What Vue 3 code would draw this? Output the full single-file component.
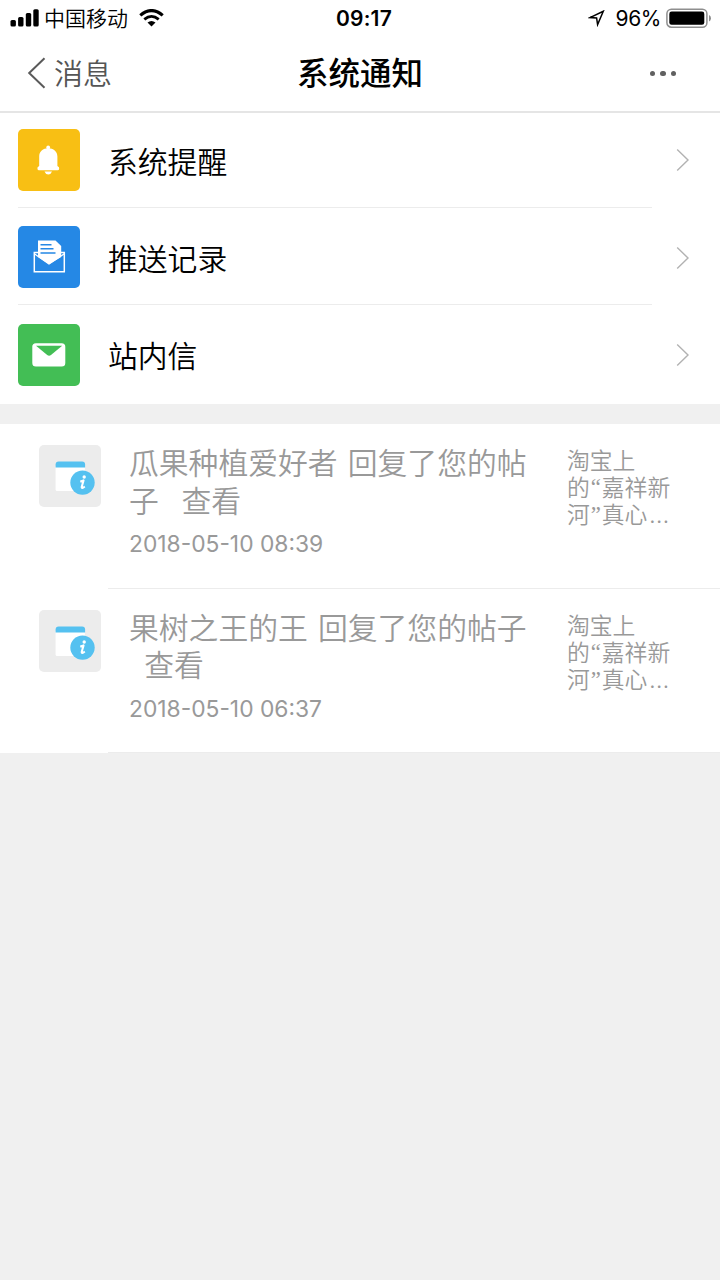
<template>
  <div class="page">
    <header class="top">
      <div class="status-bar">
        <div class="status-left">
          <svg class="signal" width="29" height="18" viewBox="0 0 29 18">
            <rect x="0.5" y="11" width="5.4" height="6.5" rx="1.5" />
            <rect x="8.1" y="8" width="5.4" height="9.5" rx="1.5" />
            <rect x="15.8" y="4" width="5.4" height="13.5" rx="1.5" />
            <rect x="23.3" y="0.3" width="5.4" height="17.2" rx="1.5" />
          </svg>
          <span class="carrier">中国移动</span>
          <svg class="wifi" width="26" height="18" viewBox="0 0 26 18">
            <path d="M1.3 6.4Q12.5 -3.2 23.7 6.4" fill="none" stroke="#000" stroke-width="3.2" />
            <path d="M5.3 10.4Q12.5 4.4 19.7 10.4" fill="none" stroke="#000" stroke-width="2.8" />
            <path d="M8.5 13.6Q12.5 10.4 16.5 13.6L12.5 17.4Z" />
          </svg>
        </div>
        <div class="clock">09:17</div>
        <div class="status-right">
          <svg class="location" width="17" height="17" viewBox="0 0 17 17">
            <path d="M2 7.6L15.3 1.2L9.6 14.6L8.6 8Z" fill="none" stroke="#000" stroke-width="1.5" />
          </svg>
          <span class="percent">96%</span>
          <svg class="battery" width="46" height="21" viewBox="0 0 46 21">
            <rect x="0.9" y="1.2" width="40" height="18" rx="4.5" fill="none" stroke="#8e8e8e" stroke-width="1.5" />
            <rect x="3.3" y="3.6" width="35" height="13.2" rx="2.3" />
            <path d="M43 7q2 1 2 3.2t-2 3.2z" fill="#8e8e8e" />
          </svg>
        </div>
      </div>
      <nav class="nav-bar">
        <a class="back">
          <svg width="20" height="32" viewBox="0 0 20 32">
            <path d="M17.5 1.2L2.2 16L17.5 30.8" fill="none" stroke="#5a5a5a" stroke-width="2" />
          </svg>
          <span>消息</span>
        </a>
        <h1 class="title">系统通知</h1>
        <div class="more"><i></i><i></i><i></i></div>
      </nav>
    </header>

    <ul class="menu">
      <li v-for="item in menu" :key="item.icon" class="menu-item">
        <div class="tile" :class="item.icon">
          <svg v-if="item.icon === 'bell'" width="62" height="62" viewBox="0 0 62 62" fill="#fff">
            <circle cx="30.2" cy="18.4" r="1.9" />
            <path d="M21.2 37V27.5C21.2 22.3 25 19.2 30.2 19.2S39.4 22.3 39.4 27.5V37L41 38.2Q41.6 41.2 39.8 41.2H20.8Q19 41.2 19.6 38.2Z" />
            <path d="M26.5 42.5H34Q33 45.4 30.3 45.4T26.5 42.5Z" />
          </svg>
          <svg v-else-if="item.icon === 'push'" width="62" height="62" viewBox="0 0 62 62">
            <path d="M20 14.5H37.5L43.2 20V31L31 38.2L20 31Z" fill="#fff" />
            <path d="M22.5 18.7H33.5M22.5 22.8H35.5M22.5 26.9H37.5" stroke="#2588e5" stroke-width="1.5" />
            <path d="M20 26.5H16.3V45.8H46.3V26.5H43" fill="none" stroke="#fff" stroke-width="1.5" />
            <path d="M16.3 27.8L31 38L46.3 27.8" fill="none" stroke="#fff" stroke-width="1.3" />
          </svg>
          <svg v-else width="62" height="62" viewBox="0 0 62 62">
            <rect x="14.3" y="19.2" width="33" height="23.4" rx="3.6" fill="#fff" />
            <path d="M18 21.8H44.2L33 31Q31.1 32.4 29.2 31Z" fill="#43be55" />
          </svg>
        </div>
        <div class="menu-body">
          <span class="menu-label">{{ item.label }}</span>
        </div>
        <svg class="chevron" width="14" height="24" viewBox="0 0 14 24">
          <path d="M1.2 1.5L12 12L1.2 22.5" fill="none" stroke="#b2b2b2" stroke-width="1.4" />
        </svg>
      </li>
    </ul>

    <ul class="notices">
      <li v-for="n in notices" :key="n.time" class="notice">
        <div class="notice-icon">
          <svg width="62" height="62" viewBox="0.4 0.4 62 62">
            <path d="M17 21.5H46.3V46.3H18.5Q17 46.3 17 44.8Z" fill="#fff" />
            <path d="M17 23V20Q17 17 20 17H43.5Q46.5 17 46.5 20V23Z" fill="#55c1f0" />
            <circle cx="43.9" cy="38" r="12.2" fill="#55c1f0" />
            <circle cx="45.6" cy="32.4" r="1.7" fill="#fff" />
            <path d="M41.6 36.9Q43.6 36.6 45 35.8L43.1 42.3Q42.8 44.6 46.2 41.9" fill="none" stroke="#fff" stroke-width="2" stroke-linejoin="round" />
          </svg>
        </div>
        <div class="notice-main">
          <div class="notice-content">
            <div class="notice-text">
              <p v-for="line in n.lines" :key="line">{{ line }}</p>
            </div>
            <time>{{ n.time }}</time>
          </div>
          <div class="excerpt">
            <p v-for="line in excerpt" :key="line">
              <span v-for="part in splitMarks(line)" :key="part" :class="markClass(part)">{{ part }}</span>
            </p>
          </div>
        </div>
      </li>
    </ul>
  </div>
</template>

<script setup>
const menu = [
  { icon: 'bell', label: '系统提醒' },
  { icon: 'push', label: '推送记录' },
  { icon: 'mail', label: '站内信' },
]

const notices = [
  { lines: ['瓜果种植爱好者 回复了您的帖', '子\u00a0\u00a0 查看'], time: '2018-05-10 08:39' },
  { lines: ['果树之王的王 回复了您的帖子', '\u00a0 查看'], time: '2018-05-10 06:37' },
]

const excerpt = ['淘宝上', '的“嘉祥新', '河”真心…']

// quotes and ellipsis use narrow Latin glyphs instead of full-width ones
const splitMarks = (line) => line.split(/([“”…])/).filter(Boolean)

const markClass = (part) => {
  if (part === '“' || part === '”') return 'quote'
  if (part === '…') return 'dots'
  return ''
}
</script>

<style>
body { background: #f0f0f0; }
</style>

<style scoped>
.page {
  min-height: 1280px;
  background: #f0f0f0;
  font-family: Inter, 'Noto Sans CJK SC', sans-serif;
  color: #000;
}

svg { display: block; flex: none; }
ul, p, h1 { margin: 0; padding: 0; }
ul { list-style: none; }

.top {
  height: 113px;
  padding-top: 1px;
  box-sizing: border-box;
  background: #fff;
  border-bottom: 2px solid #e5e5e5;
}

.status-bar {
  display: grid;
  grid-template-columns: 1fr auto 1fr;
  align-items: center;
  height: 35px;
  padding: 0 8px;
}

.status-left, .status-right { display: flex; align-items: center; }
.status-right { justify-content: flex-end; }
.signal { margin: 0 0 2px 2px; }

.carrier {
  margin-left: 5px;
  font-family: 'Noto Sans CJK SC', sans-serif;
  font-size: 21px;
  font-weight: 350;
  line-height: 30px;
  padding-bottom: 5px;
}
.wifi { margin: 0 0 2px 11px; }

.clock {
  padding-left: 8px;
  font-size: 21px;
  font-weight: 600;
  letter-spacing: 0.2px;
  line-height: 36px;
}
.location { margin: 0 11px 1px 0; }
.percent { font-size: 21px; line-height: 36px; margin-right: 5px; letter-spacing: -0.4px; }
.battery { margin-bottom: 2px; }

.nav-bar {
  display: grid;
  grid-template-columns: 1fr auto 1fr;
  align-items: center;
  height: 75px;
  padding: 0 27px;
}

.back {
  display: flex;
  align-items: center;
  gap: 7px;
  font-size: 29px;
  font-weight: 350;
  line-height: 74px;
  color: #555;
}
.back svg { margin-bottom: 2px; }
.back span { height: 72px; }

.title {
  font-size: 31.5px;
  font-weight: 500;
  line-height: 76px;
}

.more { display: flex; justify-content: flex-end; gap: 5px; padding: 0 17px 1px 0; }
.more i { width: 5.5px; height: 5.5px; border-radius: 50%; background: #606060; }

.menu { background: #fff; height: 290.5px; }

.menu-item {
  display: flex;
  align-items: center;
  height: 97.4px;
  padding: 0 30px 0 18px;
  box-sizing: border-box;
}
.menu-item:first-child { height: 96.4px; padding-bottom: 1px; }

.tile { width: 62px; height: 62px; margin-bottom: 1.2px; border-radius: 5px; overflow: hidden; }
.bell { background: #f8bf14; }
.push { background: #2588e5; }
.mail { background: #43be55; }
.chevron { margin-bottom: 1px; }

.menu-body {
  flex: 1;
  padding: 2px 0 0 28px;
  font-size: 29.8px;
  font-weight: 350;
  line-height: 96px;
}

.menu-item:not(:last-child) {
  background: linear-gradient(#ececec, #ececec) 18px calc(100% - 1.4px) / 634px 1px no-repeat;
}

.notices { margin-top: 20.5px; background: #fff; }

.notice {
  display: flex;
  height: 164.5px;
  padding-left: 39px;
  color: #999;
  font-weight: 350;
}

.notice-icon {
  width: 62px;
  height: 62px;
  margin-top: 21.3px;
  border-radius: 5px;
  background: #ececec;
  overflow: hidden;
}

.notice-main {
  display: flex;
  flex: 1;
  justify-content: space-between;
  box-sizing: border-box;
  margin-left: 7px;
  padding: 21px 0 0 21px;
  border-bottom: 1px solid #ececec;
}

.notice-text p { font-size: 29.8px; line-height: 37.5px; white-space: pre; }
.notice-text p:first-child { word-spacing: 1.8px; }
.notice-text p:last-child { word-spacing: -0.8px; }

.notice-content time {
  display: block;
  margin-top: 10px;
  font-size: 22.8px;
  font-weight: 400;
  line-height: 27px;
}

.excerpt {
  width: 153px;
  padding-top: 2px;
}

.excerpt p {
  display: flex;
  height: 27px;
  font-size: 22.8px;
  line-height: 27px;
}

.quote {
  width: 12px;
  font-family: 'Liberation Serif', serif;
  text-align: center;
}
.dots { padding-left: 1.5px; letter-spacing: 1px; font-size: 24px; }
</style>
